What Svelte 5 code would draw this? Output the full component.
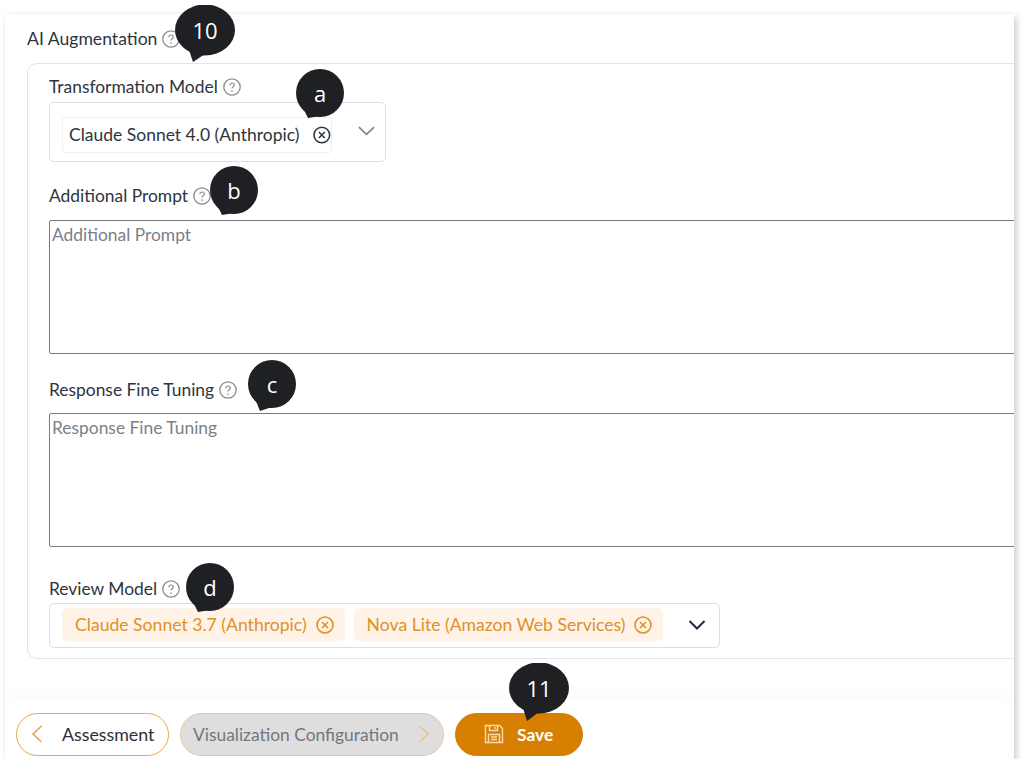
<script lang="ts">
	const bubbles = [
		{ text: '10', x: 175, y: 5, w: 60, h: 58 },
		{ text: 'a', x: 296, y: 69, w: 48, h: 50 },
		{ text: 'b', x: 210, y: 166, w: 48, h: 50 },
		{ text: 'c', x: 248, y: 360, w: 48, h: 52 },
		{ text: 'd', x: 186, y: 563, w: 48, h: 50 },
		{ text: '11', x: 509, y: 663, w: 60, h: 59 }
	];
</script>

{#snippet help()}
	<svg class="help" viewBox="0 0 18 18" width="18" height="18" fill="none">
		<circle cx="9" cy="9" r="8.2" stroke="#878c92" stroke-width="1.3" />
		<path d="M6.800 7.200c0-1.300 1-2.200 2.300-2.200s2.200.9 2.200 2c0 1.700-2.300 1.800-2.300 3.600" stroke="#878c92" stroke-width="1.200" />
		<circle cx="9" cy="13" r=".85" fill="#878c92" />
	</svg>
{/snippet}

{#snippet clear(color)}
	<svg class="clear" viewBox="0 0 18 18" width="18" height="18" fill="none" stroke={color} stroke-width="1.6">
		<circle cx="9" cy="9" r="8" />
		<path d="M6 6l6 6M12 6l-6 6" />
	</svg>
{/snippet}

<div class="panel">
	<div class="content">
		<div class="title">AI Augmentation {@render help()}</div>
		<div class="group">
			<div class="label">Transformation Model {@render help()}</div>
			<div class="select single">
				<span class="chip plain">Claude Sonnet 4.0 (Anthropic) {@render clear('#2d3540')}</span>
				<svg class="chevron" viewBox="0 0 18 10" width="17" height="10" fill="none" stroke="#7f858c" stroke-width="1.8">
					<path d="M1 1l8 7.500L17 1" />
				</svg>
			</div>

			<div class="label prompt">Additional Prompt {@render help()}</div>
			<textarea class="area" placeholder="Additional Prompt"></textarea>

			<div class="label tuning">Response Fine Tuning {@render help()}</div>
			<textarea class="area tight" placeholder="Response Fine Tuning"></textarea>

			<div class="label review">Review Model {@render help()}</div>
			<div class="select multi">
				<span class="chip tag">Claude Sonnet 3.7 (Anthropic) {@render clear('#e0902b')}</span>
				<span class="chip tag">Nova Lite (Amazon Web Services) {@render clear('#e0902b')}</span>
				<svg class="chevron dark" viewBox="0 0 18 10" width="18" height="10" fill="none" stroke="#1f2c3d" stroke-width="2">
					<path d="M1.500 1l7.500 7.500L16.500 1" />
				</svg>
			</div>
		</div>
	</div>

	<div class="footer">
		<button class="btn back">
			<svg viewBox="0 0 12 20" width="12" height="20" fill="none" stroke="#e8a04a" stroke-width="1.500"><path d="M10.500 2L2 10l8.500 8" /></svg>
			Assessment
		</button>
		<button class="btn next">
			Visualization Configuration
			<svg viewBox="0 0 12 20" width="12" height="20" fill="none" stroke="#ecc08c" stroke-width="1.500"><path d="M1.500 2L10 10l-8.500 8" /></svg>
		</button>
		<button class="btn save">
			<svg viewBox="0 0 20 20" width="20" height="20" fill="none" stroke="#f6dcb6" stroke-width="1.400">
				<path d="M1.500 1.500h14l3 3v14h-17z" />
				<path d="M5.500 1.500v5h8v-5M11 3v2" />
				<path d="M4.500 18.500v-8h11v8M7 13h6M7 15.500h6" />
			</svg>
			Save
		</button>
	</div>
</div>

{#each bubbles as b}
	<div class="bubble" style="left:{b.x}px;top:{b.y}px;width:{b.w}px;height:{b.h}px">
		<svg viewBox="0 0 {b.w} {b.h}" width={b.w} height={b.h}>
			<ellipse cx={b.w / 2} cy={b.w > 50 ? 25 : 24} rx={b.w / 2} ry={b.w > 50 ? 25.5 : 24} fill="#1e2024" />
			<path d="M{b.w / 2 - 16} {b.w > 50 ? 45 : 41}L{b.w / 2 - 12} {b.h - 1}L{b.w / 2} {b.w > 50 ? 49 : 47}Z" fill="#1e2024" />
		</svg>
		<span class="bubble-text" style="height:{b.w > 50 ? 50 : 48}px">{b.text}</span>
	</div>
{/each}

<style>
	:global(body) {
		margin: 0;
		background: #fff;
	}

	.panel {
		box-sizing: border-box;
		position: relative;
		display: flex;
		flex-direction: column;
		width: 1009px;
		height: 745px;
		margin: 14px 0 0 5px;
		background: #fff;
		font-family: Lato, 'Open Sans', sans-serif;
		font-size: 17.4px;
		color: #2d3540;
		box-shadow: 3px 3px 6px rgba(0, 0, 0, 0.18), -1px -1px 4px rgba(0, 0, 0, 0.04);
		overflow: hidden;
	}

	.content {
		flex: 1;
		padding: 15px 0 0 22px;
		min-height: 0;
	}

	.title,
	.label {
		display: flex;
		align-items: center;
		gap: 5px;
		height: 20px;
		line-height: 20px;
	}

	.title {
		font-size: 17.600px;
	}

	.group {
		box-sizing: border-box;
		height: 596px;
		margin-top: 14px;
		padding: 13px 0 0 21px;
		border: 1px solid #e2e6ec;
		border-right: none;
		border-radius: 10px 0 0 10px;
	}

	.select {
		box-sizing: border-box;
		display: flex;
		align-items: center;
		border: 1px solid #d9dfe8;
		border-radius: 5px;
		background: #fff;
	}

	.single {
		width: 337px;
		height: 60px;
		margin-top: 5px;
		padding-left: 12px;
	}

	.multi {
		width: 671px;
		height: 45px;
		margin-top: 4px;
		padding-left: 12px;
		gap: 9px;
	}

	.chip {
		box-sizing: border-box;
		display: inline-flex;
		align-items: center;
		white-space: nowrap;
		border-radius: 3px;
	}

	.plain {
		width: 270px;
		height: 36px;
		margin-top: 5px;
		padding-left: 6px;
		gap: 14px;
		border: 1px solid #eef0f3;
		font-size: 17.500px;
	}

	.tag {
		height: 33px;
		margin-top: -2px;
		padding: 0 11px 0 13px;
		gap: 9px;
		background: #fef3e6;
		color: #e0902b;
		border-radius: 5px;
		font-size: 17.600px;
	}

	.chevron {
		margin: -3px 0 0 26px;
	}

	.chevron.dark {
		margin: -2px 0 0 16px;
	}

	.prompt {
		margin-top: 24px;
	}

	.tuning {
		margin-top: 26px;
	}

	.review {
		margin-top: 32px;
	}

	.area {
		box-sizing: border-box;
		display: block;
		width: 990px;
		height: 134px;
		margin: 14px 0 0;
		padding: 3px 2px;
		border: 1px solid #767b80;
		border-radius: 2px;
		font: inherit;
		color: inherit;
		resize: none;
		outline: none;
	}

	.area.tight {
		margin-top: 13px;
	}

	.area::placeholder {
		color: #7b8088;
		opacity: 1;
	}

	.footer {
		display: flex;
		align-items: center;
		gap: 11px;
		height: 58px;
		padding: 8px 0 0 11px;
		box-sizing: border-box;
		background: #fff;
		box-shadow: 0 -8px 12px rgba(0, 0, 0, 0.012);
	}

	.btn {
		box-sizing: border-box;
		display: flex;
		align-items: center;
		height: 43px;
		border: 1px solid #e8a850;
		border-radius: 22px;
		font: inherit;
		white-space: nowrap;
	}

	.back {
		width: 153px;
		padding: 0 0 0 14px;
		gap: 19px;
		background: #fff;
		color: #2d3035;
		font-size: 17.800px;
	}

	.next {
		width: 264px;
		padding: 0 0 0 12px;
		gap: 19px;
		background: #dedede;
		color: #73777c;
		border-color: #ecc594;
	}

	.save {
		width: 128px;
		padding: 0 0 0 28px;
		gap: 13px;
		background: #d67f00;
		border-color: #d67f00;
		color: #fff;
		font-weight: 700;
	}

	.bubble {
		position: absolute;
	}

	.bubble svg {
		display: block;
	}

	.bubble-text {
		position: absolute;
		top: 0;
		left: 0;
		right: 0;
		display: flex;
		align-items: center;
		justify-content: center;
		font-family: 'Open Sans', sans-serif;
		font-size: 22px;
		color: #fff;
	}
</style>
